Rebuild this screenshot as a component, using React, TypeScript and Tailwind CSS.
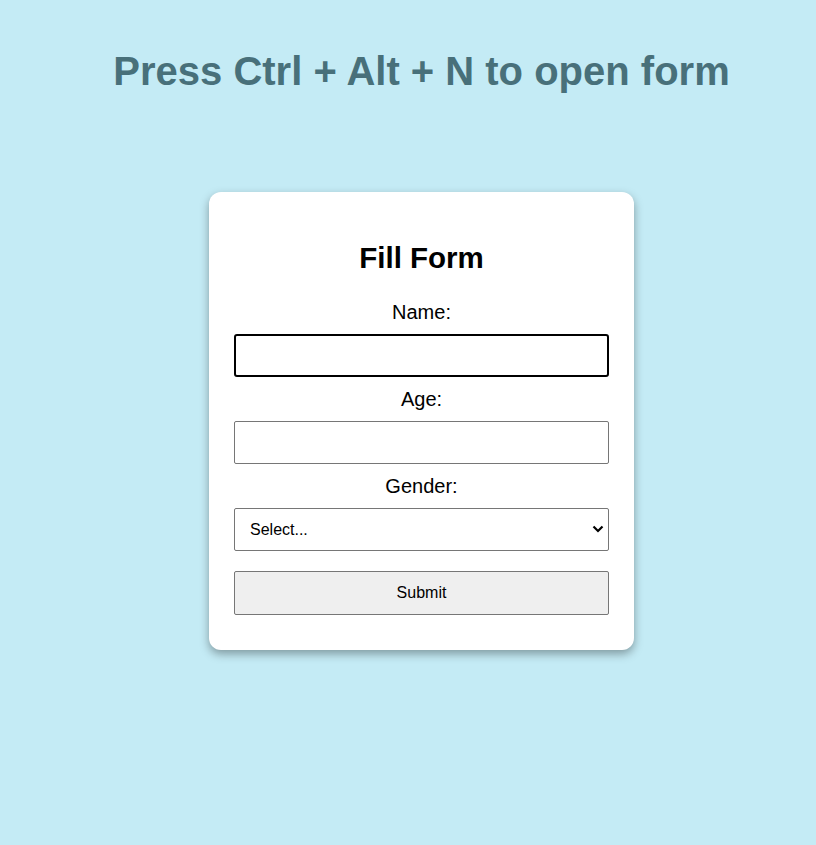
import React from "react";

export default function App() {
  return (
    <div
      className="min-h-[845px] w-full bg-[#c4ebf5] pl-[27px]"
      style={{ fontFamily: '"Liberation Sans", Arial, sans-serif' }}
    >
      <div className="flex flex-col items-center">
        <h1 className="mt-[48px] text-[40px] font-bold leading-[46px] text-[#48707a]">
          Press Ctrl + Alt + N to open form
        </h1>
        <div className="mt-[98px] w-[425px] rounded-[12px] bg-white px-[25px] pt-[48px] pb-[35px] shadow-[0_4px_10px_rgba(0,0,0,0.35)]">
          <h2 className="text-center text-[29.5px] font-bold leading-[36px] text-black">
            Fill Form
          </h2>
          <div className="mt-[24px] text-center text-[20px] leading-[24px] text-black">
            Name:
          </div>
          <div className="mt-[10px] h-[43px] w-full rounded-[3px] border-2 border-black bg-white" />
          <div className="my-[10px] text-center text-[20px] leading-[24px] text-black">
            Age:
          </div>
          <div className="h-[43px] w-full rounded-[2px] border border-[#767676] bg-white" />
          <div className="my-[10px] text-center text-[20px] leading-[24px] text-black">
            Gender:
          </div>
          <div className="relative flex h-[43px] w-full items-center rounded-[2px] border border-[#767676] bg-white pl-[15px] text-[16px] text-black">
            <span>Select...</span>
            <svg
              className="absolute right-[4px] top-[16px]"
              width="12"
              height="8"
              viewBox="0 0 12 8"
            >
              <path d="M1.5 1.5 L6 6 L10.5 1.5" fill="none" stroke="#000" strokeWidth="2.2" />
            </svg>
          </div>
          <button className="mt-[20px] flex h-[44px] w-full items-center justify-center rounded-[2px] border border-[#767676] bg-[#efefef] text-[16px] text-black">
            Submit
          </button>
        </div>
      </div>
    </div>
  );
}
